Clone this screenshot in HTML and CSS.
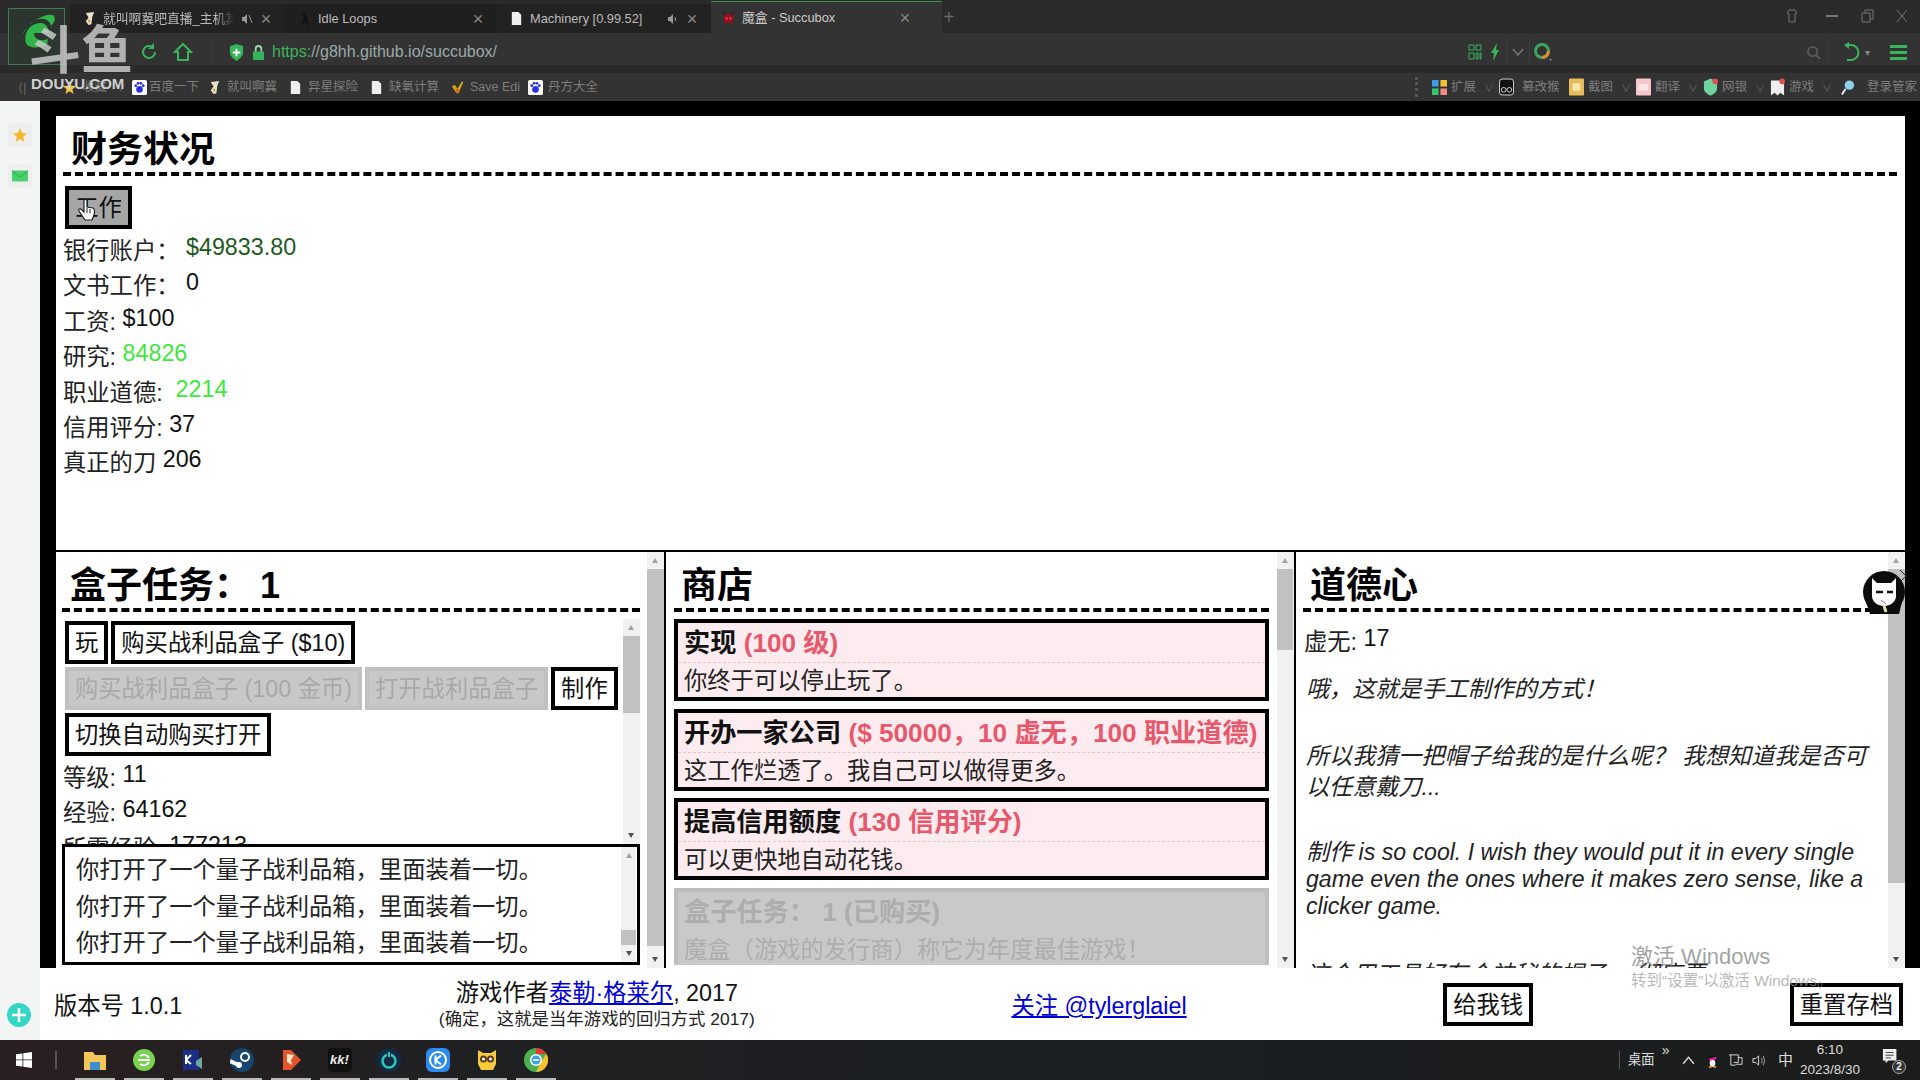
FILE: index.html
```html
<!DOCTYPE html>
<html lang="zh-CN">
<head>
<meta charset="utf-8">
<title>魔盒 - Succubox</title>
<link rel="stylesheet" href="styles.css">
</head>
<body>
<div class="screen">
  <header class="browser">
    <div class="tabbar">
      <div class="tab t1"><svg class="fav" viewBox="0 0 16 16"><path d="M4 2l9-1-2 5-1 8-3 1-3-4 3-4z" fill="#e8e2c8"/><path d="M6 9l3 1-1 3z" fill="#c98a1f"/></svg><span class="tab-title fade">就叫啊冀吧直播_主机其他</span><svg class="spk" viewBox="0 0 12 12"><path d="M1 4h2l3-3v10L3 8H1z" fill="#999"/><path d="M8 2l3 8" stroke="#999"/></svg><span class="tab-x">×</span></div>
      <div class="tab t2"><svg class="fav" viewBox="0 0 16 16"><circle cx="8" cy="3" r="2" fill="#111"/><path d="M7 5h3l1 5 2 5h-2l-2-4-3 4H4l3-6z" fill="#111"/></svg><span class="tab-title">Idle Loops</span><span class="tab-x">×</span></div>
      <div class="tab t3"><svg class="fav" viewBox="0 0 16 16"><path d="M3 1h7l3 3v11H3z" fill="#eee"/></svg><span class="tab-title">Machinery [0.99.52]</span><svg class="spk" viewBox="0 0 12 12"><path d="M1 4h2l3-3v10L3 8H1z" fill="#999"/><path d="M8 4q1.500 2 0 4" stroke="#999" fill="none"/></svg><span class="tab-x">×</span></div>
      <div class="tab active"><svg class="fav" viewBox="0 0 16 16"><rect x="3" y="4" width="10" height="10" fill="#8c1020"/><path d="M2 1l4 4H3zM14 1l-4 4h3z" fill="#222"/><circle cx="6" cy="9" r="1.400" fill="#f33"/><circle cx="10" cy="9" r="1.400" fill="#f33"/></svg><span class="tab-title bright">魔盒 - Succubox</span><span class="tab-x">×</span></div>
      <span class="tab-plus">+</span>
      <div class="win-ctrls">
        <svg class="win-i" viewBox="0 0 16 16"><path d="M5 2h6l2 3-2 1v8H5V6L3 5z" fill="none" stroke="#777"/></svg>
        <svg class="win-i" viewBox="0 0 16 16"><rect x="2" y="7" width="12" height="2" fill="#777"/></svg>
        <svg class="win-i" viewBox="0 0 16 16"><path d="M3 5h8v9H3zM6 5V2h8v9h-3" fill="none" stroke="#777"/></svg>
        <svg class="win-i" viewBox="0 0 16 16"><path d="M3 2l10 12M13 2L3 14" stroke="#777" fill="none"/></svg>
      </div>
    </div>
    <div class="addressbar">
      <svg class="nav-i" viewBox="0 0 20 20"><path d="M16 10a6 6 0 1 1-2-4.500" fill="none" stroke="#38b45a" stroke-width="2"/><path d="M15 1v6H9z" fill="#38b45a"/></svg>
      <svg class="nav-i" viewBox="0 0 20 20"><path d="M10 2L2 10h3v8h10v-8h3z" fill="none" stroke="#38b45a" stroke-width="2"/></svg>
      <span class="addr-sep"></span>
      <svg class="sec-i" viewBox="0 0 16 18"><path d="M1 2l7-2 7 2v7c0 4-4 7-7 9-3-2-7-5-7-9z" fill="#33b558"/><path d="M7 5h2v3h3v2H9v3H7v-3H4V8h3z" fill="#fff"/></svg>
      <svg class="lock-i" viewBox="0 0 14 16"><rect x="1" y="7" width="12" height="9" rx="1" fill="#33b558"/><path d="M4 7V4a3 3 0 0 1 6 0v3" fill="none" stroke="#9ad8aa" stroke-width="2"/></svg>
      <span class="url"><span class="https">https:</span>//g8hh.github.io/succubox/</span>
      <div class="addr-right">
        <svg class="ar-i" viewBox="0 0 14 16"><path d="M1 1h5v5H1zM8 1h5v5H8zM1 9h5v6H1zM8 9h2v6H8zM12 9h1v6h-1z" fill="none" stroke="#38b45a"/></svg>
        <svg class="ar-b" viewBox="0 0 10 18"><path d="M7 0L1 10h3l-1 8 6-11H6z" fill="#38b45a"/></svg>
        <span class="ar-sep"></span>
        <svg class="ar-c" viewBox="0 0 12 8"><path d="M1 1l5 6 5-6" fill="none" stroke="#777" stroke-width="1.500"/></svg>
        <span class="ar-sep"></span>
        <svg class="ar-o" viewBox="0 0 20 20"><circle cx="9" cy="9" r="6.500" fill="none" stroke="#3aa85c" stroke-width="3"/><path d="M9 15.500A6.500 6.500 0 0 0 15.500 9" fill="none" stroke="#e08a35" stroke-width="3"/><path d="M16 17h3l-1.500 2z" fill="#888"/></svg>
        <span class="ar-gap"></span>
        <svg class="ar-s" viewBox="0 0 16 16"><circle cx="7" cy="7" r="5" fill="none" stroke="#666" stroke-width="1.500"/><path d="M11 11l4 4" stroke="#666" stroke-width="1.500"/></svg>
        <span class="ar-sep2"></span>
        <svg class="ar-u" viewBox="0 0 18 20"><path d="M5 3h4a7 7 0 0 1 0 15H5" fill="none" stroke="#38b45a" stroke-width="2"/><path d="M7 0L2 3l5 4z" fill="#38b45a"/></svg>
        <span class="ar-caret">▾</span>
        <span class="ar-menu"><i></i><i></i><i></i></span>
      </div>
    </div>
    <div class="bookmarks">
      <span class="bm-back">⟨|</span>
      <span class="bm bm-fav"><svg class="bm-i" viewBox="0 0 16 16"><path d="M8 1l2 5 5 .500-4 3.500 1.500 5L8 12l-4.500 3L5 10 1 6.500 6 6z" fill="#f2c94c"/></svg><span class="bm-t">收藏</span><span class="car">∨</span></span>
      <span class="bm bm-a"><svg class="bm-i" viewBox="0 0 16 16"><rect width="16" height="16" rx="2" fill="#fff"/><circle cx="8" cy="10" r="3.500" fill="#2932e1"/><circle cx="4" cy="6" r="1.500" fill="#2932e1"/><circle cx="12" cy="6" r="1.500" fill="#2932e1"/><circle cx="6.500" cy="3.500" r="1.500" fill="#2932e1"/><circle cx="9.500" cy="3.500" r="1.500" fill="#2932e1"/></svg><span class="bm-t">百度一下</span></span>
      <span class="bm bm-b"><svg class="bm-i" viewBox="0 0 16 16"><path d="M4 2l9-1-2 5-1 8-3 1-3-4 3-4z" fill="#e8e2c8"/><path d="M6 9l3 1-1 3z" fill="#c98a1f"/></svg><span class="bm-t clip">就叫啊冀</span></span>
      <span class="bm bm-b"><svg class="bm-i" viewBox="0 0 16 16"><path d="M3 1h7l3 3v11H3z" fill="#eee"/></svg><span class="bm-t clip">异星探险</span></span>
      <span class="bm bm-b"><svg class="bm-i" viewBox="0 0 16 16"><path d="M3 1h7l3 3v11H3z" fill="#eee"/></svg><span class="bm-t clip">缺氧计算</span></span>
      <span class="bm bm-c"><svg class="bm-i" viewBox="0 0 16 16"><path d="M2 7l3-2 3 4 5-8 1 2-5 11H7z" fill="#d4a017"/><path d="M7 9l2 1-2 5z" fill="#d33"/></svg><span class="bm-t clip">Save Edi</span></span>
      <span class="bm bm-d"><svg class="bm-i" viewBox="0 0 16 16"><rect width="16" height="16" rx="2" fill="#fff"/><circle cx="8" cy="10" r="3.500" fill="#2932e1"/><circle cx="4" cy="6" r="1.500" fill="#2932e1"/><circle cx="12" cy="6" r="1.500" fill="#2932e1"/><circle cx="6.500" cy="3.500" r="1.500" fill="#2932e1"/><circle cx="9.500" cy="3.500" r="1.500" fill="#2932e1"/></svg><span class="bm-t clip">丹方大全</span></span>
      <div class="bm-right">
        <span class="bm-grip"></span>
        <span class="bmr"><svg class="bm-i" viewBox="0 0 16 16"><rect width="7" height="7" fill="#3d9be9"/><rect x="9" width="7" height="7" fill="#f2c230"/><rect y="9" width="7" height="7" fill="#3cc46a"/><rect x="9" y="9" width="7" height="7" fill="#f08a80"/></svg><span class="bm-t">扩展</span><span class="car">∨</span></span>
        <span class="bmr"><svg class="bm-i bm-tall" viewBox="0 0 16 18"><rect x=".5" y=".5" width="15" height="17" rx="3" fill="#111" stroke="#ddd"/><circle cx="5" cy="12" r="2.500" fill="none" stroke="#ddd"/><circle cx="11" cy="12" r="2.500" fill="none" stroke="#ddd"/></svg><span class="bm-t wide">篡改猴</span></span>
        <span class="bmr"><svg class="bm-i bm-tall" viewBox="0 0 16 18"><rect width="16" height="18" rx="1" fill="#e9bb5c"/><rect x="4" y="5" width="8" height="8" fill="#fbe7b0"/></svg><span class="bm-t">截图</span><span class="car">∨</span></span>
        <span class="bmr"><svg class="bm-i bm-tall" viewBox="0 0 16 18"><rect width="16" height="18" rx="1" fill="#f7c6cb"/><rect x="3" y="6" width="10" height="7" fill="#fbe4e6"/></svg><span class="bm-t">翻译</span><span class="car">∨</span></span>
        <span class="bmr"><svg class="bm-i bm-tall" viewBox="0 0 16 18"><path d="M1 3l7-3 7 3v8c0 3-4 6-7 7-3-1-7-4-7-7z" fill="#6fd3a0"/><circle cx="13" cy="3" r="3" fill="#e05050"/></svg><span class="bm-t">网银</span><span class="car">∨</span></span>
        <span class="bmr game-bm"><svg class="bm-i bm-tall" viewBox="0 0 16 18"><path d="M1 2h14v16l-4-3-3 3-3-3-4 3z" fill="#eee"/><circle cx="13" cy="3" r="3" fill="#e05050"/></svg><span class="bm-t">游戏</span><span class="car">∨</span></span>
        <span class="bmr last"><svg class="bm-i bm-tall" viewBox="0 0 16 18"><circle cx="10" cy="7" r="5" fill="#8ed0f0"/><path d="M6 11l-4 6" stroke="#eee" stroke-width="2"/></svg><span class="bm-t wide2">登录管家</span></span>
      </div>
    </div>
  </header>

  <div class="workspace">
    <aside class="sidebar">
      <span class="side-card"><svg viewBox="0 0 16 16"><path d="M8 1l2 5 5 .500-4 3.500 1.500 5L8 12l-4.500 3L5 10 1 6.500 6 6z" fill="#f7b52c"/></svg></span>
      <span class="side-card"><svg viewBox="0 0 16 16"><rect y="2.500" width="16" height="11" rx="1" fill="#48d16f"/><path d="M0 3l8 6 8-6" fill="none" stroke="#2aa24e"/></svg></span>
      <span class="side-plus"><svg viewBox="0 0 24 24"><circle cx="12" cy="12" r="12" fill="#35d6c6"/><path d="M12 5v14M5 12h14" stroke="#fff" stroke-width="2.500"/></svg></span>
    </aside>
    <main class="page">
      <div class="game">
        <section class="finance">
          <h2 class="heading">财务状况</h2>
          <div class="fin-btn"><button class="btn hover">工作</button></div>
          <div class="stat">银行账户： <span class="val money">$49833.80</span></div>
          <div class="stat">文书工作： <span class="val">0</span></div>
          <div class="stat">工资: <span class="val">$100</span></div>
          <div class="stat">研究: <span class="val bright-g">84826</span></div>
          <div class="stat">职业道德:&nbsp; <span class="val bright-g">2214</span></div>
          <div class="stat">信用评分: <span class="val">37</span></div>
          <div class="stat">真正的刀 <span class="val">206</span></div>
        </section>
        <div class="columns">
          <section class="col col-box">
            <div class="col-body">
              <h2 class="heading">盒子任务： 1</h2>
              <div class="inner-top">
                <div class="inner-scroll">
                  <div class="btn-row"><button class="btn">玩</button><button class="btn">购买战利品盒子 ($10)</button></div>
                  <div class="btn-row"><button class="btn off">购买战利品盒子 (100 金币)</button><button class="btn off">打开战利品盒子</button><button class="btn">制作</button></div>
                  <div class="btn-row"><button class="btn">切换自动购买打开</button></div>
                  <div class="stat first">等级: <span class="val">11</span></div>
                  <div class="stat">经验: <span class="val">64162</span></div>
                  <div class="stat">所需经验: <span class="val">177213</span></div>
                </div>
                <div class="sbar sb-inner"><span class="up"></span><span class="thumb"></span><span class="down"></span></div>
              </div>
              <div class="log">
                <div class="log-text">
                  <p>你打开了一个量子战利品箱，里面装着一切。</p>
                  <p>你打开了一个量子战利品箱，里面装着一切。</p>
                  <p>你打开了一个量子战利品箱，里面装着一切。</p>
                </div>
                <div class="sbar sb-log"><span class="up"></span><span class="thumb"></span><span class="down"></span></div>
              </div>
            </div>
            <div class="sbar sb-box"><span class="up"></span><span class="thumb"></span><span class="down"></span></div>
          </section>
          <section class="col col-shop bordered">
            <div class="col-body">
              <h2 class="heading">商店</h2>
              <div class="shop-list">
                <article class="item"><div class="item-t">实现 <span class="cost">(100 级)</span></div><div class="item-d">你终于可以停止玩了。</div></article>
                <article class="item"><div class="item-t">开办一家公司 <span class="cost">($ 50000，10 虚无，100 职业道德)</span></div><div class="item-d">这工作烂透了。我自己可以做得更多。</div></article>
                <article class="item"><div class="item-t">提高信用额度 <span class="cost">(130 信用评分)</span></div><div class="item-d">可以更快地自动花钱。</div></article>
                <article class="item bought"><div class="item-t">盒子任务： 1 (已购买)</div><div class="item-d">魔盒（游戏的发行商）称它为年度最佳游戏！</div></article>
              </div>
            </div>
            <div class="sbar sb-shop"><span class="up"></span><span class="thumb"></span><span class="down"></span></div>
          </section>
          <section class="col col-moral bordered">
            <div class="col-body">
              <h2 class="heading">道德心</h2>
              <div class="stat moral-stat">虚无: <span class="val">17</span></div>
              <div class="moral-text">
                <p>哦，这就是手工制作的方式！</p>
                <p>所以我猜一把帽子给我的是什么呢？ 我想知道我是否可以任意戴刀...</p>
                <p class="latin">制作 is so cool. I wish they would put it in every single game even the ones where it makes zero sense, like a clicker game.</p>
                <p>这个用工具好有个神秘的帽子。 彻底要</p>
              </div>
            </div>
            <div class="sbar sb-moral"><span class="up"></span><span class="thumb"></span><span class="down"></span></div>
          </section>
        </div>
      </div>
      <footer class="footer">
        <span class="ver">版本号 1.0.1</span>
        <div class="credit">
          <div class="credit-main">游戏作者<a href="#">泰勒·格莱尔</a>, 2017</div>
          <div class="credit-sub">(确定，这就是当年游戏的回归方式 2017)</div>
        </div>
        <a class="follow" href="#">关注 @tylerglaiel</a>
        <button class="btn">给我钱</button>
        <button class="btn">重置存档</button>
      </footer>
    </main>
  </div>

  <div class="taskbar">
    <span class="tb-win"><svg viewBox="0 0 16 16"><path d="M0 2.300l6.500-.9v6.100H0zM7.300 1.300L16 0v7.500H7.300zM0 8.300h6.500v6.200L0 13.700zM7.300 8.300H16V16l-8.700-1.200z" fill="#fff"/></svg></span>
    <span class="tb-sep"></span>
    <span class="tb-app on"><svg viewBox="0 0 24 24"><path d="M1 4h9l2 3h11v15H1z" fill="#f3c655"/><rect x="7" y="14" width="10" height="8" fill="#3f8fd0"/></svg></span>
    <span class="tb-app on"><svg viewBox="0 0 24 24"><circle cx="12" cy="12" r="11" fill="#7ad04f"/><path d="M6 12h12M8 8a6 6 0 0 1 9 2M8 16a6 6 0 0 0 9-2" stroke="#fff" stroke-width="2" fill="none"/></svg></span>
    <span class="tb-app on"><svg viewBox="0 0 24 24"><rect x="2" y="2" width="16" height="20" fill="#1c2f87"/><path d="M5 7v9M5 12l5-5M5 12l5 4" stroke="#fff" stroke-width="2" fill="none"/><path d="M15 13l6-4v12l-6-4z" fill="#6fa8a0"/></svg></span>
    <span class="tb-app on"><svg viewBox="0 0 24 24"><circle cx="12" cy="12" r="12" fill="#16456f"/><circle cx="15" cy="9" r="4" fill="none" stroke="#fff" stroke-width="2"/><path d="M0 13l9 4" stroke="#fff" stroke-width="4"/><circle cx="9" cy="17" r="3" fill="#fff"/></svg></span>
    <span class="tb-app on"><svg viewBox="0 0 24 24"><path d="M4 2h8l10 10-10 10H4z" fill="#e2562d"/><path d="M8 6l7 1-3 5 1 5-5-3z" fill="#f6e6c8"/></svg></span>
    <span class="tb-app on"><span class="kk">kk!</span></span>
    <span class="tb-app on"><svg viewBox="0 0 24 24"><circle cx="12" cy="12" r="12" fill="#132a44"/><circle cx="12" cy="13" r="6.500" fill="none" stroke="#2fc8b8" stroke-width="2.500"/><path d="M12 3v6" stroke="#132a44" stroke-width="4"/><path d="M12 4v5" stroke="#2fc8b8" stroke-width="2"/></svg></span>
    <span class="tb-app on"><svg viewBox="0 0 24 24"><rect width="24" height="24" rx="6" fill="#2b8af0"/><circle cx="12" cy="12" r="8" fill="none" stroke="#fff" stroke-width="2"/><path d="M9.500 7.500v9M15 7.500l-5.500 4.500 5.500 4.500" stroke="#fff" stroke-width="2" fill="none"/></svg></span>
    <span class="tb-app on"><svg viewBox="0 0 24 24"><path d="M3 2l5 3h8l5-3v14l-3 6H6l-3-6z" fill="#f6cc3e"/><circle cx="8.500" cy="11" r="3.500" fill="#5b3a1a"/><circle cx="15.500" cy="11" r="3.500" fill="#5b3a1a"/><circle cx="8.500" cy="11" r="1.500" fill="#fff"/><circle cx="15.500" cy="11" r="1.500" fill="#fff"/></svg></span>
    <span class="tb-app on"><svg viewBox="0 0 24 24"><circle cx="12" cy="12" r="12" fill="#4caf50"/><path d="M12 0a12 12 0 0 1 10.400 6H12z" fill="#e53935"/><path d="M22.400 6A12 12 0 0 1 12 24l5-10z" fill="#fbc02d"/><circle cx="12" cy="12" r="6" fill="#fff"/><circle cx="12" cy="12" r="4.500" fill="#3f9fe0"/><path d="M9 12h6" stroke="#fff" stroke-width="1.500"/></svg></span>
    <div class="tray">
      <span class="tray-sep"></span>
      <span class="desk">桌面</span>
      <span class="chev">»</span>
      <svg class="tr-i" viewBox="0 0 14 14"><path d="M2 10l5-6 5 6" fill="none" stroke="#ddd" stroke-width="1.200"/></svg>
      <svg class="tr-i" viewBox="0 0 14 16"><ellipse cx="7" cy="9" rx="4.500" ry="6.500" fill="#111"/><ellipse cx="7" cy="11" rx="3" ry="4" fill="#eee"/><path d="M3 6l8-2v3l-8 1z" fill="#e01d9b"/><path d="M3 15h3M8 15h3" stroke="#f5a623" stroke-width="1.500"/></svg>
      <svg class="tr-i" viewBox="0 0 16 16"><path d="M1 2h10v8H6M3 2v11h5" fill="none" stroke="#ddd"/><path d="M11 5h4v7H8" fill="none" stroke="#ddd"/></svg>
      <svg class="tr-i" viewBox="0 0 16 16"><path d="M1 6h3l3-3v10l-3-3H1z" fill="none" stroke="#ddd"/><path d="M10 5q2 3 0 6M12 3q3 5 0 10" fill="none" stroke="#aaa"/></svg>
      <span class="ime">中</span>
      <div class="clock"><span>6:10</span><span>2023/8/30</span></div>
      <span class="notif"><svg viewBox="0 0 20 20"><path d="M1 1h15v13H7l-3 3v-3H1z" fill="#eee"/><path d="M4 5h9M4 8h9M4 11h6" stroke="#333"/></svg><b class="notif-n">2</b></span>
    </div>
  </div>

  <div class="logo-overlay">
    <svg class="logo-box" viewBox="0 0 57 57"><rect x=".5" y=".5" width="56" height="56" fill="#2c3a2f" fill-opacity=".75" stroke="#3f7a50"/><path d="M18 35c-3-12 6-21 16-20 4 1 7 5 7 10H26c0 6 6 9 14 6l-1 6c-10 4-19 3-21-2z" fill="#2fb54a"/><path d="M14 26C24 10 42 4 46 8c2 3 0 7-3 10-1-6-8-9-15-6-5 2-9 7-12 12z" fill="#2fb54a"/></svg>
    <span class="logo-cn">斗鱼</span>
    <span class="logo-en">DOUYU.COM</span>
  </div>
  <div class="hand"><svg viewBox="0 0 20 24"><path d="M7 2c1-1 2-1 3 0v7l6 1c2 1 2 3 1 7l-2 5H8l-6-9c-1-2 1-3 3-1l2 2z" fill="#fff" stroke="#222" stroke-width="1.200"/><path d="M10 10v5M13 11v4" stroke="#222"/></svg></div>
  <div class="mascot"><svg viewBox="0 0 44 46"><circle cx="22" cy="22" r="21" fill="#0c0c0c"/><path d="M10 8l5 5h14l5-5v18c0 6-6 10-12 10S10 32 10 26z" fill="#fff"/><path d="M14 22h7M25 22h6" stroke="#111" stroke-width="2.500"/><path d="M19 30l5 4" stroke="#b58" stroke-width="1"/><path d="M4 32l9 8h18l9-8-3 12H8z" fill="#0c0c0c"/><path d="M22 36l2 6" stroke="#dfe6a0" stroke-width="3"/><path d="M38 0l6 6-6 6" fill="none" stroke="#222"/></svg></div>
  <div class="activate">
    <div class="act-a">激活 Windows</div>
    <div class="act-b">转到“设置”以激活 Windows。</div>
  </div>
</div>
</body>
</html>
```
FILE: styles.css
```css
* { box-sizing: border-box; }
html, body { margin: 0; padding: 0; }
body { font-family: "Liberation Sans", "Noto Sans CJK SC", sans-serif; background: #000; color: #111; }
p, h2 { margin: 0; }
.screen { position: relative; width: 1920px; height: 1080px; overflow: hidden; display: flex; flex-direction: column; }

/* browser chrome */
.browser { flex: none; height: 101px; background: #2a2a2a; color: #aaa; font-size: 12.800px; }
.tabbar { height: 33px; display: flex; align-items: flex-end; padding-left: 70px; background: #2a2a2a; }
.tab { height: 29px; display: flex; align-items: center; gap: 6px; padding: 0 12px 0 12px; background: #222; color: #bbb; line-height: 16px; }
.t1 { width: 215px; } .t2 { width: 212px; background: #1f1f1f; } .t3 { width: 214px; }
.tab.active { width: 231px; height: 32px; background: #333; border-top: 1px solid #3f8f4c; padding: 0 30px 0 10px; }
.fav { width: 15px; height: 15px; flex: none; }
.tab-title { flex: 1; white-space: nowrap; overflow: hidden; width: 0; }
.fade { -webkit-mask-image: linear-gradient(90deg, #000 85%, transparent); mask-image: linear-gradient(90deg, #000 85%, transparent); }
.bright { color: #ccc; }
.spk { width: 12px; height: 12px; flex: none; }
.tab-x { font-size: 18px; color: #888; width: 14px; text-align: center; font-weight: 300; flex: none; }
.tab-plus { margin: 0 0 5px 1px; width: 14px; color: #666; font-size: 20px; line-height: 22px; }
.win-ctrls { margin: 0 10px 9px auto; display: flex; gap: 19px; }
.win-i { width: 16px; height: 16px; }
.win-i:first-child { margin-right: 5px; }

.addressbar { height: 32px; background: #333; display: flex; align-items: center; padding: 6px 0 0 139px; }
.nav-i { width: 20px; height: 20px; flex: none; margin-right: 14px; }
.addr-sep { width: 1px; height: 22px; background: #3c3c3c; margin: 0 17px 0 4px; }
.sec-i { width: 15px; height: 17px; flex: none; margin-right: 8px; }
.lock-i { width: 13px; height: 15px; flex: none; margin-right: 7px; }
.url { font-size: 16px; color: #9aa; line-height: 18px; }
.https { color: #3cb35a; }
.addr-right { margin-left: auto; display: flex; align-items: center; height: 100%; padding-right: 13px; }
.ar-i { width: 14px; height: 16px; margin-right: 8px; }
.ar-b { width: 10px; height: 18px; margin-right: 6px; }
.ar-sep { width: 1px; height: 26px; background: #3c3c3c; }
.ar-c { width: 12px; height: 8px; margin: 0 5px 0 5px; }
.ar-o { width: 20px; height: 20px; margin-left: 2.500px; }
.ar-gap { width: 253px; }
.ar-s { width: 15px; height: 15px; }
.ar-sep2 { width: 1px; height: 26px; background: #3c3c3c; margin: 0 14.500px 0 6px; }
.ar-u { width: 18px; height: 20px; }
.ar-caret { font-size: 10px; color: #888; margin: 0 15px 0 5px; width: 10px; }
.ar-menu { display: flex; flex-direction: column; gap: 3px; width: 17px; }
.ar-menu i { height: 3px; background: #38b45a; }

.bookmarks { margin-top: 8px; height: 28px; background: #333; display: flex; align-items: center; padding-left: 18px; color: #7e7e7e; font-size: 12.500px; }
.bm-back { width: 44px; color: #666; font-size: 13px; flex: none; }
.bm { display: flex; align-items: center; gap: 2px; flex: none; height: 100%; }
.bm-i { width: 15px; height: 15px; flex: none; }
.bm-tall { height: 18px; }
.bm-fav { width: 70px; gap: 5px; } .bm-a { width: 75px; } .bm-b { width: 81px; gap: 5px; } .bm-c { width: 78px; gap: 5px; } .bm-d { width: 80px; gap: 5px; }
.bm-t { white-space: nowrap; overflow: hidden; line-height: 16px; }
.car { color: #666; font-size: 10px; margin-left: 4px; }
.bm-right { margin-left: auto; display: flex; align-items: center; height: 100%; }
.bm-grip { width: 3px; height: 20px; border-left: 3px dotted #555; margin-right: 14px; }
.bmr { display: flex; align-items: center; gap: 4px; width: 67px; flex: none; }
.bmr:nth-child(3) { width: 70px; }
.bmr .bm-t.wide { margin-left: 4px; }
.bmr.game-bm { width: 70px; }
.bmr.last { width: 80px; }
.bm-t.wide2 { margin-left: 8px; }

/* page */
.workspace { flex: none; height: 939px; display: flex; }
.sidebar { flex: none; width: 40px; background: #f3f5f5; display: flex; flex-direction: column; align-items: center; padding-top: 22px; gap: 17px; }
.side-card { width: 24px; height: 24px; border-radius: 3px; background: #eee; display: flex; align-items: center; justify-content: center; }
.side-card svg { width: 16px; height: 16px; }
.side-plus { width: 24px; height: 24px; margin: auto 0 13px -2px; }
.side-plus svg { width: 24px; height: 24px; display: block; }
.page { flex: 1; display: flex; flex-direction: column; min-width: 0; }
.game { flex: none; height: 867px; background: #000; padding: 15px 15px 2px 16px; display: flex; flex-direction: column; }

.heading { height: 60px; font-size: 36px; font-weight: 700; line-height: 50px; padding: 9px 0 0 8px; color: #000; border-bottom: 4px dashed #000; white-space: nowrap; }
.finance { flex: none; height: 434px; background: #fff; padding: 0 8px 0 7px; }
.fin-btn { padding: 10px 0 0 2px; height: 55px; margin-bottom: 3px; }

.btn { height: 43px; font: 23.300px/33px "Liberation Sans", "Noto Sans CJK SC", sans-serif; padding: 2px 6px 0; border: 4px solid #000; background: #fff; color: #111; flex: none; white-space: nowrap; }
.btn.hover { background: #a6a6a6; width: 67px; }
.btn.off { background: #c8c8c8; border-color: #c0c0c0; color: #a8a8a8; }

.stat { height: 35.400px; font-size: 23.300px; line-height: 35.400px; white-space: nowrap; color: #222; }
.val { vertical-align: 4px; color: #111; line-height: 1; }
.money { color: #1e5a1e; }
.bright-g { color: #3de83d; }

.columns { flex: 1; display: flex; min-height: 0; }
.col { background: #fff; border-top: 2px solid #000; display: flex; min-width: 0; height: 418px; }
.col-box { width: 608px; }
.col-shop { width: 630px; }
.col-moral { width: 611px; }
.bordered { border-left: 2px solid #000; }
.col-body { flex: 1; min-width: 0; overflow: hidden; padding: 0 7px 0 6px; }
.col-shop .col-body { padding: 0 8px; }
.col-moral .col-body { padding: 0 3px 0 7px; }
.col-moral .heading { padding-left: 7px; }
.col-shop .heading { padding-left: 7px; }

.sbar { flex: none; width: 17px; background: #f1f1f1; display: flex; flex-direction: column; }
.sbar .thumb { background: #c1c1c1; }
.sbar .up, .sbar .down { flex: none; height: 17px; position: relative; }
.sbar .up::before, .sbar .down::before { content: ""; position: absolute; left: 5px; top: 6px; border-left: 3.500px solid transparent; border-right: 3.500px solid transparent; }
.sbar .up::before { border-bottom: 5px solid #a3a3a3; }
.sbar .down::before { border-top: 5px solid #505050; }
.sbar .down { margin-top: auto; }
.sb-box .thumb { height: 377px; }
.sb-shop .thumb { height: 81px; width: 16px; }
.sb-moral .thumb { height: 314px; }

.inner-top { height: 232px; display: flex; padding-top: 7px; overflow: hidden; }
.inner-scroll { flex: 1; min-width: 0; padding-left: 1px; overflow: hidden; }
.btn-row { display: flex; gap: 3px; padding: 2px 0 1px 2px; height: 46px; }
.sb-inner { height: 225px; }
.sb-inner .thumb { height: 77px; }
.stat.first { margin-top: 4px; }

.log { height: 121px; border: 3px solid #000; display: flex; overflow: hidden; background: #fff; }
.log-text { flex: 1; padding: 5px 0 0 11px; font-size: 23.300px; line-height: 36.500px; color: #222; }
.sb-log { width: 15px; margin-right: 1px; }
.sb-log .thumb { height: 17px; margin-top: 66px; }

.shop-list { padding-top: 7px; display: flex; flex-direction: column; gap: 7.600px; height: 353px; overflow: hidden; }
.item { flex: none; height: 82px; border: 4px solid #000; background: #fdecef; padding: 0 6px; }
.item-t { height: 40px; font-size: 26.200px; font-weight: 700; line-height: 40px; color: #111; border-bottom: 1px dashed #ddc8cc; white-space: nowrap; margin: 0 -6px; padding: 0 6px; }
.cost { color: #e8586c; }
.item-d { font-size: 23.300px; line-height: 36px; color: #222; white-space: nowrap; }
.item.bought { background: #c9c9c9; border-color: #bdbdbd; }
.bought .item-t, .bought .item-d { color: #adadad; border-bottom-color: #c9c9c9; }

.moral-stat { margin: 13px 0 0 1px; }
.moral-text { padding: 0 4px 0 3px; margin-top: 14px; font-style: italic; font-size: 23.100px; line-height: 31px; color: #222; }
.moral-text p { margin-bottom: 36px; }
.moral-text p.latin { line-height: 27px; margin-bottom: 39px; }

.footer { flex: none; height: 72px; background: #fff; display: flex; align-items: center; justify-content: space-between; padding: 0 17px 0 14px; font-size: 23.300px; }
.credit { text-align: center; line-height: 1; }
.credit-main { line-height: 30px; }
.credit-sub { font-size: 17.400px; line-height: 22px; color: #222; }
.footer a { color: #0000d8; }
.ver, .follow { white-space: nowrap; }

/* taskbar */
.taskbar { flex: none; height: 40px; background: linear-gradient(90deg, #2a1f20 0, #1f2022 25%, #1b1f22 60%, #1c1c1c 100%); display: flex; align-items: center; }
.tb-win { width: 49px; padding-left: 16px; display: flex; }
.tb-win svg { width: 16px; height: 16px; }
.tb-sep { width: 2px; height: 18px; background: #555; margin: 0 13px 0 6px; }
.tb-app { width: 49px; height: 40px; display: flex; align-items: center; justify-content: center; position: relative; flex: none; }
.tb-app svg { width: 24px; height: 24px; }
.tb-app.on::after { content: ""; position: absolute; left: 5px; right: 4px; bottom: 0; height: 2px; background: #bbb; }
.kk { width: 24px; height: 24px; background: #111; border-radius: 4px; color: #eee; font: italic 700 13px/24px "Liberation Sans", sans-serif; text-align: center; }
.tray { margin-left: auto; display: flex; align-items: center; color: #ddd; height: 100%; font-size: 13.500px; padding-right: 6px; }
.tray-sep { width: 1px; height: 18px; background: #555; margin-right: 8px; }
.desk { margin-right: 5px; line-height: 14px; }
.chev { font-size: 14px; margin: -20px 12px 0 2px; line-height: 14px; }
.tr-i { width: 15px; height: 15px; margin-right: 8.500px; }
.ime { font-size: 15px; margin: 0 7px 0 2.500px; line-height: 18px; }
.clock { display: flex; flex-direction: column; align-items: center; line-height: 20px; margin-right: 22px; }
.notif { width: 24px; height: 24px; position: relative; margin-right: 8px; }
.notif svg { width: 18px; height: 18px; display: block; }
.notif-n { position: absolute; right: 0; bottom: -2px; width: 14px; height: 14px; border-radius: 50%; background: #333; border: 1px solid #aaa; font-size: 10px; line-height: 12px; text-align: center; color: #eee; }

/* over-the-page overlays */
.logo-overlay { position: absolute; left: 8px; top: 8px; width: 130px; height: 85px; pointer-events: none; }
.logo-box { position: absolute; left: 0; top: 0; width: 57px; height: 57px; }
.logo-cn { position: absolute; left: 21px; top: 15px; font-size: 52px; line-height: 56px; font-weight: 700; color: #c8c8c8; opacity: .85; white-space: nowrap; }
.logo-en { position: absolute; left: 23px; top: 68px; font-size: 15px; line-height: 16px; font-weight: 700; color: #d0d0d0; white-space: nowrap; }
.hand { position: absolute; left: 77px; top: 198px; width: 20px; height: 24px; }
.hand svg, .mascot svg { display: block; width: 100%; height: 100%; }
.mascot { position: absolute; left: 1861px; top: 570px; width: 46px; height: 46px; }
.activate { position: absolute; left: 1631px; top: 942px; color: rgba(120,120,120,.7); }
.act-a { font-size: 22px; line-height: 30px; }
.act-b { font-size: 15.500px; line-height: 20px; margin-top: -1px; color: rgba(150,150,150,.7); }
```
